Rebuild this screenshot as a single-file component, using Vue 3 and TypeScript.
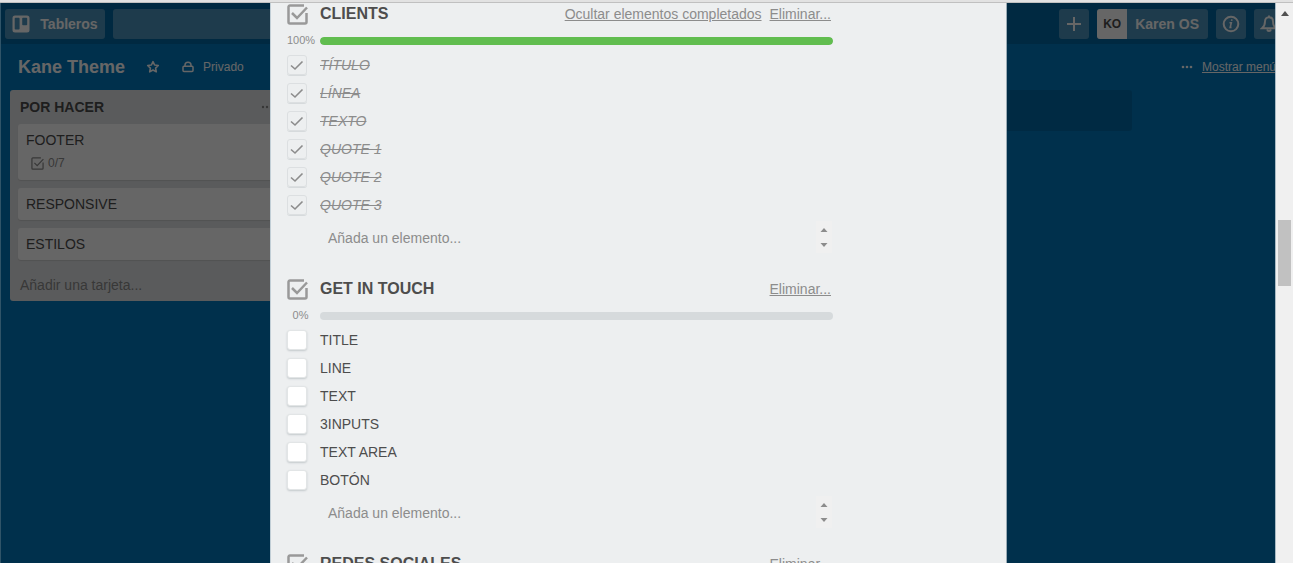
<script setup lang="ts">
import { ref } from 'vue'

interface Item {
  name: string
  done: boolean
}
interface Checklist {
  id: string
  title: string
  items: Item[]
}
interface Card {
  name: string
  badge?: string
}

const make = (names: string[], done: boolean): Item[] => names.map((name) => ({ name, done }))

const checklists = ref<Checklist[]>([
  { id: 'clients', title: 'CLIENTS', items: make(['TÍTULO', 'LÍNEA', 'TEXTO', 'QUOTE 1', 'QUOTE 2', 'QUOTE 3'], true) },
  { id: 'touch', title: 'GET IN TOUCH', items: make(['TITLE', 'LINE', 'TEXT', '3INPUTS', 'TEXT AREA', 'BOTÓN'], false) },
  { id: 'social', title: 'REDES SOCIALES', items: [] },
])

const cards: Card[] = [{ name: 'FOOTER', badge: '0/7' }, { name: 'RESPONSIVE' }, { name: 'ESTILOS' }]

const percent = (list: Checklist): number =>
  list.items.length ? Math.round((list.items.filter((i) => i.done).length * 100) / list.items.length) : 0
</script>

<template>
  <div class="window">
    <div class="chrome-edge"></div>
    <div class="viewport">
      <div class="stage">
        <div class="board">
          <header class="topbar">
            <button class="bar-btn boards" type="button">
              <svg width="18" height="18" viewBox="0 0 18 18">
                <path fill="#fff" fill-rule="evenodd" d="M3 0.500h12a2.500 2.500 0 0 1 2.500 2.500v12a2.500 2.500 0 0 1-2.500 2.500H3A2.500 2.500 0 0 1 .5 15V3A2.500 2.500 0 0 1 3 .5zM3.500 2.800a.8.8 0 0 0-.8.8v10.200a.8.8 0 0 0 .8.8h3.300a.8.8 0 0 0 .8-.8V3.600a.8.8 0 0 0-.8-.8zM11 2.800a.8.8 0 0 0-.8.8v5.800a.8.8 0 0 0 .8.8h3.400a.8.8 0 0 0 .8-.8V3.600a.8.8 0 0 0-.8-.8z" />
              </svg>
              Tableros
            </button>
            <input class="search" type="text" aria-label="Buscar" />
            <div class="bar-right">
              <button class="bar-btn square" type="button" aria-label="Crear">
                <svg width="16" height="16" viewBox="0 0 16 16" fill="none" stroke="#fff" stroke-width="2"><path d="M8 1v14M1 8h14" /></svg>
              </button>
              <button class="bar-btn member" type="button"><span class="avatar">KO</span><span class="member-name">Karen OS</span></button>
              <button class="bar-btn square" type="button" aria-label="Información">
                <svg width="18" height="18" viewBox="0 0 18 18" fill="none" stroke="#fff">
                  <circle cx="9" cy="9" r="7.300" stroke-width="2" />
                  <path d="M7.500 7.800h1.800l-1.100 4.600h1.300M9.600 5.900l.3-1.500" stroke-width="1.600" />
                </svg>
              </button>
              <button class="bar-btn square" type="button" aria-label="Notificaciones">
                <svg width="18" height="18" viewBox="0 0 18 18" fill="none" stroke="#fff" stroke-width="1.900">
                  <path d="M9 2.200c-2.700 0-4 1.900-4 4.300 0 3.300-.8 5-3 6.800h14c-2.200-1.800-3-3.500-3-6.800 0-2.400-1.300-4.300-4-4.300zM9 2.200V.6M7.200 14.500c.3 2 3.300 2 3.600 0" />
                </svg>
              </button>
            </div>
          </header>

          <div class="board-head">
            <h1>Kane Theme</h1>
            <button class="plain star" type="button" aria-label="Destacar">
              <svg width="14" height="14" viewBox="0 0 14 14" fill="none" stroke="#fff" stroke-width="1.600" stroke-linejoin="round">
                <path d="M7 1.600l1.600 3.400 3.700.5-2.700 2.600.7 3.700L7 10l-3.300 1.800.7-3.700L1.700 5.500 5.400 5z" />
              </svg>
            </button>
            <button class="plain privacy" type="button">
              <svg width="12" height="12" viewBox="0 0 12 12" fill="none" stroke="#fff" stroke-width="1.500">
                <rect x="1" y="5.200" width="10" height="5.300" rx="1" /><path d="M3 5.200V4a3 2.800 0 0 1 6 0v1.200" />
              </svg>
              Privado
            </button>
            <div class="menu-link">
              <svg width="12" height="4" viewBox="0 0 12 4" fill="#fff"><circle cx="2" cy="2" r="1.300" /><circle cx="6" cy="2" r="1.300" /><circle cx="10" cy="2" r="1.300" /></svg>
              <a href="#menu">Mostrar menú</a>
            </div>
          </div>

          <div class="lists">
            <section class="list">
              <div class="list-head">
                <h2>POR HACER</h2>
                <button class="plain" type="button" aria-label="Acciones de la lista">
                  <svg width="12" height="4" viewBox="0 0 12 4" fill="#888"><circle cx="2" cy="2" r="1.200" /><circle cx="6" cy="2" r="1.200" /><circle cx="10" cy="2" r="1.200" /></svg>
                </button>
              </div>
              <article v-for="card in cards" :key="card.name" class="card">
                <div class="card-name">{{ card.name }}</div>
                <div v-if="card.badge" class="badge">
                  <svg width="13" height="13" viewBox="0 0 21 21" fill="none" stroke="#8c8c8c" stroke-width="2">
                    <path d="M16 1.500H3A1.500 1.500 0 0 0 1.500 3v15A1.500 1.500 0 0 0 3 19.500h15a1.500 1.500 0 0 0 1.500-1.500V9" /><path d="M5.500 9.500l4.500 4.500L20 3.500" />
                  </svg>
                  {{ card.badge }}
                </div>
              </article>
              <button class="plain add-card" type="button">Añadir una tarjeta...</button>
            </section>
            <div class="new-list"></div>
          </div>
        </div>

        <div class="overlay">
          <main class="dialog">
            <section v-for="list in checklists" :key="list.id" class="checklist">
              <div class="check-head">
                <svg class="head-icon" width="21" height="21" viewBox="0 0 21 21" fill="none" stroke="#999" stroke-width="2.500">
                  <path d="M17 1.500H3A1.500 1.500 0 0 0 1.500 3v15A1.500 1.500 0 0 0 3 19.500h15a1.500 1.500 0 0 0 1.500-1.500V9" /><path d="M5 9l5 5L20 3.500" />
                </svg>
                <h3>{{ list.title }}</h3>
                <a v-if="list.id === 'clients'" href="#ocultar">Ocultar elementos completados</a>
                <a href="#eliminar">Eliminar...</a>
              </div>
              <div class="progress">
                <span class="percent">{{ percent(list) }}%</span>
                <div class="track"><div class="fill" :style="{ width: percent(list) + '%' }"></div></div>
              </div>
              <label v-for="item in list.items" :key="item.name" class="item" :class="{ done: item.done }">
                <input v-model="item.done" type="checkbox" />
                <svg v-if="item.done" class="tick" width="20" height="20" viewBox="0 0 20 20" fill="none" stroke="#8c8c8c" stroke-width="1.600"><path d="M4 10.500l4 3.500 7.500-7.500" /></svg>
                <span>{{ item.name }}</span>
              </label>
              <div class="add-item">
                <textarea rows="1" placeholder="Añada un elemento..." aria-label="Añada un elemento"></textarea>
                <div class="spinner">
                  <svg width="8" height="4" viewBox="0 0 8 4"><path fill="#8c8c8c" d="M4 0l3.500 4h-7z" /></svg>
                  <svg width="8" height="4" viewBox="0 0 8 4"><path fill="#8c8c8c" d="M4 4L.5 0h7z" /></svg>
                </div>
              </div>
            </section>
          </main>
        </div>
      </div>
      <div class="scrollbar">
        <svg width="8" height="5" viewBox="0 0 8 5"><path fill="#505050" d="M4 0l4 5H0z" /></svg>
        <div class="thumb"></div>
      </div>
    </div>
  </div>
</template>

<style>
body {
  margin: 0;
}
</style>

<style scoped>
* {
  box-sizing: border-box;
}
.window {
  height: 100vh;
  display: flex;
  flex-direction: column;
  overflow: hidden;
  font-family: "Liberation Sans", Arial, sans-serif;
  font-size: 14px;
  line-height: 18px;
  color: #4d4d4d;
}
h1, h2, h3 {
  margin: 0;
}
button, input, textarea {
  font: inherit;
  border: 0;
  margin: 0;
}
button {
  padding: 0;
  cursor: pointer;
}
svg {
  display: block;
  flex: none;
}
.chrome-edge {
  flex: none;
  height: 3px;
  background: #e2e2e2;
  border-bottom: 1px solid #c0c0c0;
}
.viewport {
  flex: 1;
  min-height: 0;
  display: flex;
}
.stage {
  flex: 1;
  min-width: 0;
  position: relative;
  overflow: hidden;
  background: #0079bf;
}
.board {
  width: calc(100% + 18px);
}
.topbar {
  display: flex;
  gap: 8px;
  height: 41px;
  padding: 6px 9px 5px 5px;
  background: rgba(0, 0, 0, 0.15);
}
.bar-btn {
  height: 30px;
  display: flex;
  align-items: center;
  justify-content: center;
  border-radius: 3px;
  background: rgba(255, 255, 255, 0.3);
  color: #fff;
  font-weight: bold;
}
.boards {
  width: 100px;
  gap: 10px;
}
.search {
  width: 190px;
  height: 30px;
  border-radius: 3px;
  background: rgba(255, 255, 255, 0.3);
}
.bar-right {
  display: flex;
  gap: 8px;
  margin-left: auto;
}
.square {
  width: 30px;
}
.member {
  overflow: hidden;
}
.avatar {
  width: 30px;
  line-height: 30px;
  font-size: 12px;
  background: #fff;
  color: #4d4d4d;
}
.member-name {
  padding: 0 9px 0 8px;
}
.plain {
  background: none;
  color: inherit;
}
.board-head {
  display: flex;
  align-items: center;
  height: 46px;
  padding-left: 18px;
  color: #fff;
  font-size: 12px;
}
.board-head h1 {
  font-size: 18px;
  line-height: 24px;
}
.star {
  margin-left: 21px;
}
.privacy {
  display: flex;
  align-items: center;
  gap: 9px;
  margin-left: 22px;
}
.menu-link {
  display: flex;
  align-items: center;
  gap: 9px;
  margin-left: auto;
  padding-right: 17px;
}
.menu-link a {
  color: inherit;
}
.lists {
  display: grid;
  grid-template-columns: repeat(4, 273px);
  gap: 10px;
  padding: 0 10px;
  align-items: start;
}
.list {
  padding: 0 8px;
  border-radius: 3px;
  background: #e2e4e6;
}
.list-head {
  display: flex;
  align-items: center;
  justify-content: space-between;
  height: 34px;
  padding: 0 2px;
}
.list-head h2 {
  font-size: 14px;
  line-height: 18px;
}
.card {
  margin-bottom: 8px;
  padding: 7px 8px;
  border-radius: 3px;
  background: #fff;
  box-shadow: 0 1px 1px #ccc;
}
.badge {
  display: flex;
  align-items: center;
  gap: 4px;
  margin: 5px 0 1px;
  padding-left: 5px;
  font-size: 12px;
  color: #8c8c8c;
}
.add-card {
  display: block;
  height: 33px;
  padding: 0 2px;
  color: #8c8c8c;
}
.new-list {
  grid-column: 4;
  height: 41px;
  border-radius: 3px;
  background: rgba(0, 0, 0, 0.12);
}
.overlay {
  position: absolute;
  inset: 0;
  overflow: hidden;
  padding-left: 1px;
  background: rgba(0, 0, 0, 0.6);
  border-left: 1px solid #305468;
}
.dialog {
  width: 737px;
  max-width: 100%;
  min-height: 100%;
  margin: 0 auto;
  padding: 0 173px 0 16px;
  background: #edeff0;
  border-left: 1px solid #c1ced6;
  border-right: 1px solid #9aabb5;
}
.checklist {
  margin-bottom: 24px;
}
.check-head {
  display: flex;
  align-items: center;
  gap: 8px;
  height: 22px;
  padding-right: 2px;
}
.check-head h3 {
  flex: 1;
  margin-left: 4px;
  font-size: 16px;
}
.check-head a {
  color: #8c8c8c;
}
.progress {
  display: flex;
  align-items: center;
  height: 9px;
  margin: 11px 0 6px;
}
.percent {
  width: 27px;
  margin-right: 6px;
  font-size: 11px;
  line-height: 9px;
  text-align: center;
  color: #8c8c8c;
}
.track {
  flex: 1;
  height: 8px;
  border-radius: 4px;
  overflow: hidden;
  background: #d6dadc;
}
.fill {
  height: 100%;
  border-radius: 4px;
  background: #61bd4f;
}
.item {
  position: relative;
  display: flex;
  align-items: center;
  gap: 13px;
  height: 28px;
}
.item input {
  appearance: none;
  width: 20px;
  height: 20px;
  border: 1px solid #e2e5e6;
  border-radius: 3px;
  background: #fff;
  box-shadow: 0 1px 2px #c4c9cc;
}
.item.done input {
  border-color: #dcdfe1;
  background: transparent;
  box-shadow: 0 1px 0 #d6dadc;
}
.tick {
  position: absolute;
  left: 0;
  top: 4px;
  pointer-events: none;
}
.done span {
  color: #8c8c8c;
  font-style: italic;
  text-decoration: line-through;
}
.add-item {
  display: flex;
  height: 35px;
  margin-left: 33px;
  padding: 2px 1px 1px 0;
}
.add-item textarea {
  flex: 1;
  height: 32px;
  padding: 8px;
  resize: none;
  overflow: hidden;
  background: transparent;
}
.add-item textarea::placeholder {
  color: #8c8c8c;
  opacity: 1;
}
.spinner {
  display: flex;
  flex-direction: column;
  align-items: center;
  justify-content: space-between;
  width: 16px;
  padding: 7px 0 6px;
  background: #f0f0f0;
}
.scrollbar {
  flex: none;
  display: flex;
  flex-direction: column;
  align-items: center;
  width: 18px;
  padding-top: 8px;
  background: #f0f0f0;
  border-left: 1px solid #a9bac4;
}
.thumb {
  width: 13px;
  height: 12%;
  margin-top: 204px;
  background: #c1c1c1;
}
</style>
